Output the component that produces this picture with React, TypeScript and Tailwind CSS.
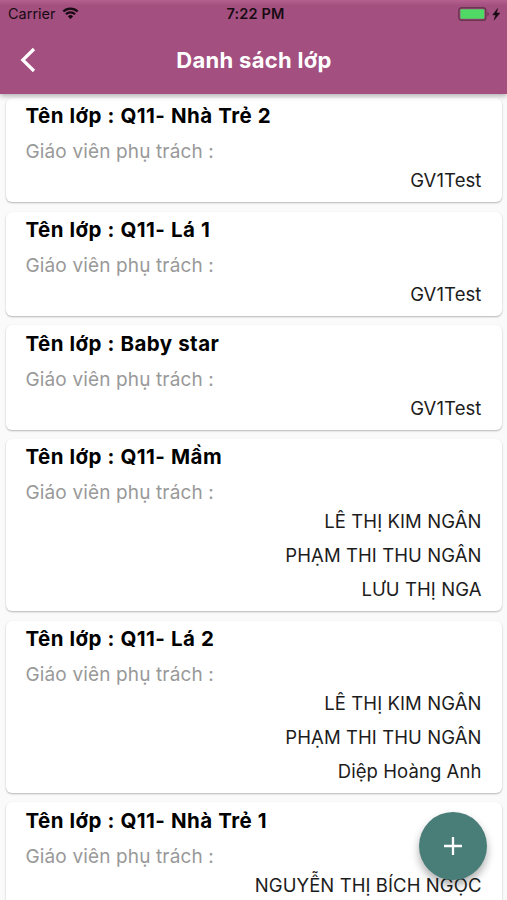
type ClassItem = {
  name: string;
  teachers: string[];
};

const classes: ClassItem[] = [
  { name: 'Q11- Nhà Trẻ 2', teachers: ['GV1Test'] },
  { name: 'Q11- Lá 1', teachers: ['GV1Test'] },
  { name: 'Baby star', teachers: ['GV1Test'] },
  { name: 'Q11- Mầm', teachers: ['LÊ THỊ KIM NGÂN', 'PHẠM THI THU NGÂN', 'LƯU THỊ NGA'] },
  { name: 'Q11- Lá 2', teachers: ['LÊ THỊ KIM NGÂN', 'PHẠM THI THU NGÂN', 'Diệp Hoàng Anh'] },
  { name: 'Q11- Nhà Trẻ 1', teachers: ['NGUYỄN THỊ BÍCH NGỌC'] },
];

function WifiIcon() {
  return (
    <svg className="ml-[6px] h-[13px] w-[17px]" viewBox="0 0 18 14" fill="none" stroke="#180b13" strokeWidth="2.4">
      <path d="M1.3 4.9a10.9 10.9 0 0 1 15.4 0" />
      <path d="M4.1 7.9a6.9 6.9 0 0 1 9.8 0" />
      <path d="M9 13 6.2 10.1a4 4 0 0 1 5.6 0z" fill="#180b13" stroke="none" />
    </svg>
  );
}

function BatteryIcon() {
  return (
    <svg className="h-[16px] w-[44px]" viewBox="0 0 44 16">
      <rect x="0.8" y="1.7" width="27" height="12.6" rx="2.8" fill="none" stroke="#69354f" strokeWidth="1.4" />
      <rect x="2.4" y="3.2" width="23.9" height="9.6" rx="1" fill="#4fda66" />
      <path d="M29.4 5.8c2 .8 2 3.6 0 4.4z" fill="#69354f" />
      <path d="M39.6 2.4 34.6 9h3l-1.6 5.2L42 7h-3.4z" fill="#180b13" stroke="#180b13" strokeWidth="0.4" />
    </svg>
  );
}

function Header() {
  return (
    <header className="relative z-10 h-[94px] bg-linear-to-b from-[#b5608f] from-0% via-[#a34f7f] via-6% to-[#a34f7f] shadow-[0_2px_5px_rgba(0,0,0,0.3)]">
      <div className="grid h-[27px] grid-cols-3 items-center pl-[8px] pr-[5px] text-[#180b13]">
        <div className="flex items-center text-[14.5px]">
          Carrier
          <WifiIcon />
        </div>
        <div className="pl-px text-center text-[14.5px] font-semibold tracking-[0.15px]">7:22 PM</div>
        <div className="flex justify-end">
          <BatteryIcon />
        </div>
      </div>
      <div className="grid h-[66px] grid-cols-[56px_1fr_56px] items-center">
        <button type="button" aria-label="Back" className="pl-[20px]">
          <svg className="h-[26px] w-[16px]" viewBox="0 0 16 26" fill="none" stroke="#fff" strokeWidth="3.2">
            <path d="M14 2 2.8 13 14 24" />
          </svg>
        </button>
        <h1 className="pl-px text-center text-[22px] font-bold tracking-[0.3px] text-white">Danh sách lớp</h1>
      </div>
    </header>
  );
}

function ClassCard({ item }: { item: ClassItem }) {
  return (
    <div className="shrink-0 rounded-[6px] bg-white pl-[19.5px] pr-[20.5px] pb-[4.8px] pt-[0.4px] shadow-[0_1px_2px_rgba(0,0,0,0.28)]">
      <h2 className="h-[36px] text-[20.5px] font-bold leading-[36px] tracking-[0.45px] [word-spacing:0.3px] text-black">
        Tên lớp : {item.name}
      </h2>
      <p className="h-[29px] pt-[7px] text-[19px] leading-[22px] tracking-[0.14px] text-[#999]">Giáo viên phụ trách :</p>
      {item.teachers.map((teacher) => (
        <p key={teacher} className="h-[34.2px] text-right text-[18.5px] leading-[34px] tracking-[0.08px] text-[#1c1c1c]">
          {teacher}
        </p>
      ))}
    </div>
  );
}

export default function App() {
  return (
    <div className="relative flex h-[900px] w-[507px] flex-col overflow-hidden bg-[#fafafa] font-['Inter','Noto_Sans',sans-serif]">
      <Header />
      <main className="flex min-h-0 flex-1 flex-col gap-[9.15px] overflow-hidden pl-[6px] pt-[4.1px] pr-[5px]">
        {classes.map((item) => (
          <ClassCard key={item.name} item={item} />
        ))}
      </main>
      <button
        type="button"
        aria-label="Add"
        className="absolute bottom-[20px] right-[20px] flex size-[68px] items-center justify-center rounded-full bg-[#487d78] shadow-[0_5px_9px_rgba(0,0,0,0.32)]"
      >
        <svg className="size-[18px]" viewBox="0 0 18 18" stroke="#fff" strokeWidth="2.3">
          <path d="M9 0v18M0 9h18" />
        </svg>
      </button>
    </div>
  );
}
